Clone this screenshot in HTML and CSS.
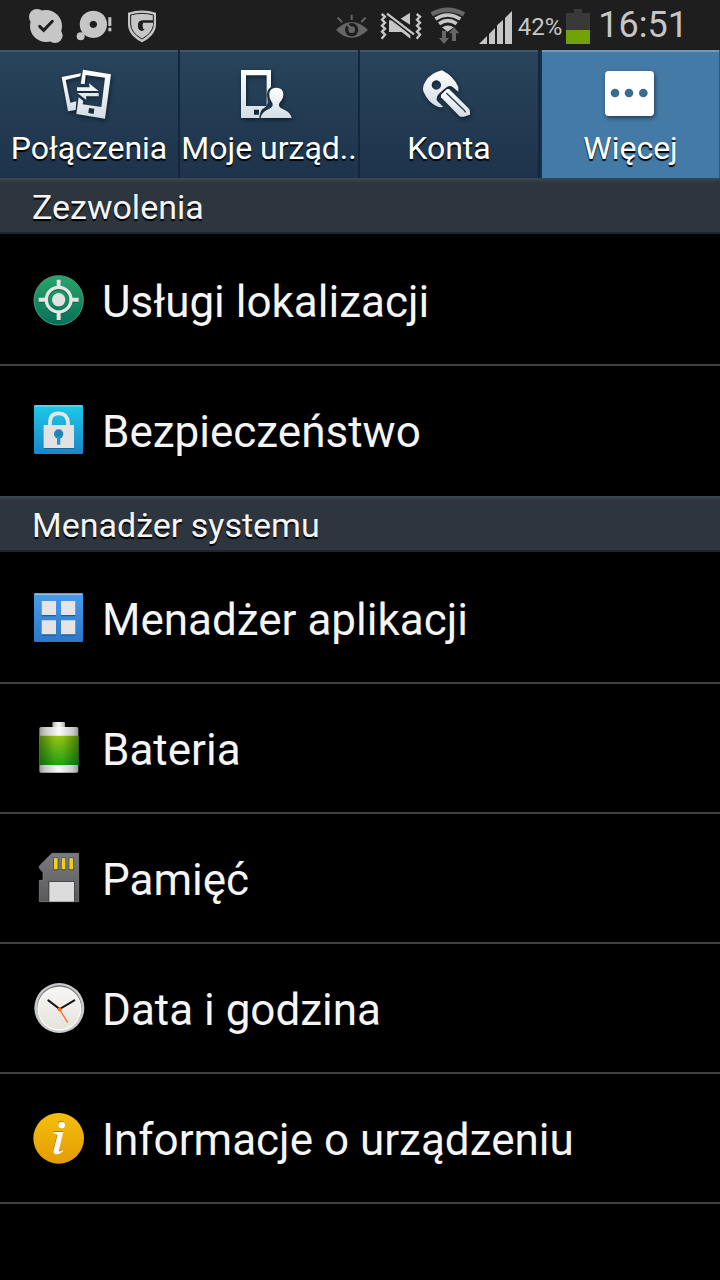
FILE: index.html
```html
<!DOCTYPE html>
<html lang="pl">
<head>
<meta charset="utf-8">
<meta name="viewport" content="width=device-width, initial-scale=1">
<title>Ustawienia</title>
<link rel="stylesheet" href="styles.css">
</head>
<body>
<header class="status">
  <div class="status-notes">
    <svg width="36" height="50" viewBox="84 0 108 150" aria-hidden="true">
      <circle cx="138" cy="78" r="48" fill="#c6c6c6"/><circle cx="111" cy="51" r="24" fill="#c6c6c6"/><circle cx="165" cy="106" r="23" fill="#c6c6c6"/>
      <path d="M119 79l12 12 26-27" fill="none" stroke="#1e1e1e" stroke-width="9" stroke-linecap="round"/>
    </svg>
    <svg width="37" height="50" viewBox="228 0 111 150" aria-hidden="true">
      <path fill="#c6c6c6" fill-rule="evenodd" d="M280 32a41 41 0 1 0 .1 0zM280 62a11 11 0 1 1-.1 0z"/>
      <circle cx="242" cy="109" r="12" fill="#c6c6c6"/>
      <path d="M325 52h9v26h-9zM325 83h9v11h-9z" fill="#c6c6c6"/>
    </svg>
    <svg width="33" height="50" viewBox="375 0 99 150" aria-hidden="true">
      <path d="M384 38q42-13 84 0v34q0 34-42 55-42-21-42-55z" fill="#c6c6c6"/>
      <path d="M392 45q34-10 68 0v27q0 26-34 45-34-19-34-45z" fill="none" stroke="#1e1e1e" stroke-width="3"/>
      <path d="M459 61h-31q-14 1-14 13v7q1 11 12 12 9-3 10-12h-8v-9h31z" fill="#1e1e1e"/>
      <path d="M429 68h30v10h-19v9h-11z" fill="#c6c6c6"/>
    </svg>
  </div>
  <div class="status-system">
    <svg width="36" height="50" viewBox="45 0 108 150" aria-hidden="true">
      <path d="M95 44v16M53 53l13 13M137 53l-13 13" stroke="#666" stroke-width="6" fill="none"/>
      <path d="M48 90q47-48 96 0-49 47-96 0z" fill="#666"/>
      <circle cx="95" cy="89" r="20" fill="#1e1e1e"/><circle cx="95" cy="89" r="10" fill="#666"/>
      <path d="M82 73l13 15" stroke="#666" stroke-width="7"/>
    </svg>
    <svg width="43" height="50" viewBox="177 0 129 150" aria-hidden="true">
      <path d="M185 42l10 8-9 9 9 9-9 9 9 9-9 9 9 9-10 12M290 42l10 8-9 9 9 9-9 9 9 9-9 9 9 9-10 12" fill="none" stroke="#c6c6c6" stroke-width="7"/>
      <path d="M207 61h10l54 44v11l-26-20h-38zM270 38v36l-28-18z" fill="#c6c6c6"/>
      <path d="M201 41l81 62" stroke="#1e1e1e" stroke-width="15"/><path d="M201 41l81 62" stroke="#c6c6c6" stroke-width="7"/>
    </svg>
    <svg width="36" height="50" viewBox="330 0 108 150" aria-hidden="true">
      <path d="M335 43q48-27 97 0" fill="none" stroke="#666" stroke-width="14"/>
      <g fill="none" stroke="#c6c6c6" stroke-width="11"><path d="M346 57q37-24 75 0"/><path d="M357 71q27-18 53 0"/></g>
      <path d="M366 82q18-11 35 0l-18 13z" fill="#c6c6c6"/>
      <path d="M366 92h12v22h9l-15 18-15-18h9zM396 123h12v-23h10l-16-19-15 19h9z" fill="#666"/>
    </svg>
    <svg class="signal" width="38" height="50" viewBox="468 0 114 150" aria-hidden="true">
      <path d="M477 132l24-24v24zM507 132v-30l18-18v48zM531 132V76l18-16v72zM555 132V54l21-21v99z" fill="#c6c6c6"/>
    </svg>
    <span class="percent">42%</span>
    <svg width="24" height="50" viewBox="198 0 72 150" aria-hidden="true">
      <path d="M198 39h24V27h24v12h24v52h-72z" fill="#393939"/><path d="M198 90h72v42h-72z" fill="#73a108"/>
    </svg>
    <time class="clock">16:51</time>
  </div>
</header>

<nav class="tabs">
  <a class="tab" href="#polaczenia">
    <svg class="tab-icon" viewBox="180 63 180 180" aria-hidden="true">
      <defs><linearGradient id="metal" x1="0" y1="0" x2="0" y2="1"><stop offset="0" stop-color="#fff"/><stop offset="1" stop-color="#d2dde5"/></linearGradient></defs>
      <path d="M188 96l58-11-2 9-44 11 14 68 18-4-2 26-23 4z" fill="url(#metal)"/>
      <path fill="url(#metal)" fill-rule="evenodd" d="M252 74l84 14-18 133-86-14 7-50 14 11-2 10 56 8 11-88-58-8-3 28-12-2zM270 189l-2 15 16 3 2-16z"/>
      <path d="M234 127h38l-2-12 29 23h-65zM299 154h-38l1 11-27-21h64z" fill="url(#metal)"/>
    </svg>
    <span class="tab-label">Połączenia</span>
  </a>
  <a class="tab" href="#urzadzenie">
    <svg class="tab-icon" viewBox="180 63 180 180" aria-hidden="true">
      <path fill="url(#metal)" fill-rule="evenodd" d="M186 75h90v51q-14 9-12 28l2 15q1 11-11 20-12 5-14 30h-55zM201 91v92h62v-92zM225 194v15h15v-15z"/>
      <path d="M292 128c-16 0-22 11-21 23 1 17 11 20 10 30-2 14-32 12-36 38h93c-5-26-37-24-38-38 0-10 11-13 13-30 1-12-5-23-21-23z" fill="url(#metal)"/>
    </svg>
    <span class="tab-label">Moje urząd..</span>
  </a>
  <a class="tab" href="#konta">
    <svg class="tab-icon" viewBox="60 63 180 180" aria-hidden="true">
      <path fill="url(#metal)" fill-rule="evenodd" d="M129 76q35 18 49 50v14l-18-15q-10-5-20 4l-18 15q-12 11-8 23l18 18q-8 4-20-2-25-12-38-42-6-15 5-31 15-26 50-34zM112 106a14 14 0 1 0 .1 0z"/>
      <path fill="url(#metal)" d="M150 132l60 59q4 5 3 18l-14 5q-12 4-19-2l-54-55v-8l18-17z"/>
      <path d="M142 144l52 50 6 8" fill="none" stroke="#263e52" stroke-width="4"/>
    </svg>
    <span class="tab-label">Konta</span>
  </a>
  <a class="tab tab-active" href="#wiecej" aria-current="page">
    <svg class="tab-icon" viewBox="603 63 180 180" aria-hidden="true">
      <rect x="615" y="78" width="147" height="135" rx="11" fill="#fff"/>
      <g fill="#3a6b90"><circle cx="645" cy="144" r="13"/><circle cx="687" cy="144" r="13"/><circle cx="730" cy="144" r="13"/></g>
    </svg>
    <span class="tab-label">Więcej</span>
  </a>
</nav>

<main>
  <section>
    <h2 class="heading">Zezwolenia</h2>
    <ul class="list">
      <li class="item"><a class="row" href="#lokalizacja">
        <svg class="row-icon" viewBox="84 45 180 180" aria-hidden="true">
          <defs><linearGradient id="green" x1="0" y1="0" x2="0" y2="1"><stop offset="0" stop-color="#2aa56c"/><stop offset="1" stop-color="#076f58"/></linearGradient></defs>
          <circle cx="176" cy="136" r="74" fill="url(#green)" stroke="#4b9a7d" stroke-width="3"/>
          <g transform="translate(0 4)" fill="none" stroke="#075c43" stroke-opacity=".6"><circle cx="176" cy="134" r="37" stroke-width="10"/><path d="M176 74v24M176 170v25M116 134h24M212 134h24" stroke-width="12"/></g>
          <g fill="none" stroke="#e5e5e5"><circle cx="176" cy="134" r="37" stroke-width="10"/><path d="M176 74v24M176 170v25M116 134h24M212 134h24" stroke-width="12"/></g>
          <circle cx="176" cy="134" r="20" fill="#e2e2e2"/>
        </svg>
        <span class="row-label">Usługi lokalizacji</span></a></li>
      <li class="item"><a class="row" href="#bezpieczenstwo">
        <svg class="row-icon" viewBox="84 435 180 180" aria-hidden="true">
          <defs><linearGradient id="cyan" x1="0" y1="0" x2="0" y2="1"><stop offset="0" stop-color="#1dc9ea"/><stop offset="1" stop-color="#1b86c8"/></linearGradient></defs>
          <rect x="102" y="450" width="147" height="147" rx="4" fill="url(#cyan)"/><path d="M104 453h143" stroke="#7de0f2" stroke-width="3"/>
          <path d="M132 580h90" stroke="#1768a0" stroke-width="4"/>
          <path d="M150 514v-12q0-27 26-27t28 27v12" fill="none" stroke="#e6e6e6" stroke-width="11"/>
          <path d="M131 510h91v69h-91z" fill="#e2e2e2"/>
          <circle cx="176" cy="537" r="14" fill="#1c86b8"/><path d="M171 545h10v24h-10z" fill="#2b93c8"/>
        </svg>
        <span class="row-label">Bezpieczeństwo</span></a></li>
    </ul>
  </section>
  <section>
    <h2 class="heading">Menadżer systemu</h2>
    <ul class="list">
      <li class="item"><a class="row" href="#aplikacje">
        <svg class="row-icon" viewBox="84 324 180 180" aria-hidden="true">
          <defs><linearGradient id="blue" x1="0" y1="0" x2="0" y2="1"><stop offset="0" stop-color="#4a9cec"/><stop offset="1" stop-color="#2a78c8"/></linearGradient></defs>
          <rect x="102" y="339" width="147" height="147" rx="4" fill="url(#blue)"/><path d="M104 343h143" stroke="#9ac8f5" stroke-width="3"/>
          <path d="M125 366h43v43h-43zM183 366h43v43h-43zM125 424h43v43h-43zM183 424h43v43h-43z" fill="#1f5ca0"/>
          <path d="M125 363h43v42h-43zM183 363h43v42h-43zM125 421h43v42h-43zM183 421h43v42h-43z" fill="#e4e4e4"/>
        </svg>
        <span class="row-label">Menadżer aplikacji</span></a></li>
      <li class="item"><a class="row" href="#bateria">
        <svg class="row-icon" viewBox="84 54 180 180" aria-hidden="true">
          <defs>
            <linearGradient id="steel"><stop offset="0" stop-color="#999"/><stop offset=".15" stop-color="#c8c8c8"/><stop offset=".5" stop-color="#fafafa"/><stop offset=".85" stop-color="#ccc"/><stop offset="1" stop-color="#999"/></linearGradient>
            <linearGradient id="charge" x1="0" y1="0" x2="0" y2="1"><stop offset="0" stop-color="#96c211"/><stop offset="1" stop-color="#20a018"/></linearGradient>
            <linearGradient id="edge"><stop offset="0" stop-color="#003800" stop-opacity=".5"/><stop offset=".4" stop-color="#003800" stop-opacity="0"/><stop offset=".6" stop-color="#003800" stop-opacity="0"/><stop offset="1" stop-color="#003800" stop-opacity=".5"/></linearGradient>
          </defs>
          <rect x="157" y="66" width="38" height="20" rx="3" fill="url(#steel)"/>
          <rect x="118" y="81" width="117" height="137" rx="5" fill="url(#steel)"/>
          <path d="M118 107h117v88H118z" fill="url(#charge)"/><path d="M118 107h117v88H118z" fill="url(#edge)"/>
        </svg>
        <span class="row-label">Bateria</span></a></li>
      <li class="item"><a class="row" href="#pamiec">
        <svg class="row-icon" viewBox="84 444 180 180" aria-hidden="true">
          <defs><linearGradient id="card" x1="0" y1="0" x2="0" y2="1"><stop offset="0" stop-color="#7b7c7f"/><stop offset="1" stop-color="#58595b"/></linearGradient></defs>
          <path d="M156 460h80v145H118v-64h11v-24l-11-12v-7z" fill="url(#card)" stroke="#898a8c" stroke-width="2"/>
          <path d="M144 605v-62h81v62" fill="#4a4a4c"/><path d="M148 546h74v59h-74z" fill="#dcdcdd"/>
          <path d="M160 472h15v39h-15zM183 472h15v39h-15zM206 472h15v39h-15z" fill="#4a4637"/>
          <path d="M162 476h11v32h-11zM185 476h11v32h-11zM208 476h11v32h-11z" fill="#f3cf12"/><path d="M162 475h11M185 475h11M208 475h11" stroke="#fff" stroke-width="2"/>
        </svg>
        <span class="row-label">Pamięć</span></a></li>
      <li class="item"><a class="row" href="#data">
        <svg class="row-icon" viewBox="84 54 180 180" aria-hidden="true">
          <defs><linearGradient id="dial" x1="0" y1="0" x2="0" y2="1"><stop offset="0" stop-color="#f7f6f4"/><stop offset="1" stop-color="#e6e3dd"/></linearGradient></defs>
          <circle cx="178" cy="144" r="75" fill="#c9cacc"/><circle cx="178" cy="143" r="67" fill="#77787a"/><circle cx="178" cy="146" r="66" fill="#fff"/><circle cx="178" cy="145" r="63" fill="url(#dial)"/>
          <path d="M145 121l34 26 44-26" fill="none" stroke="#16161a" stroke-width="6" stroke-linecap="round"/>
          <path d="M179 148l24 40" stroke="#f37032" stroke-width="4"/><circle cx="179" cy="148" r="6" fill="#ff6717"/>
        </svg>
        <span class="row-label">Data i godzina</span></a></li>
      <li class="item"><a class="row" href="#informacje">
        <svg class="row-icon" viewBox="84 444 180 180" aria-hidden="true">
          <defs><linearGradient id="gold" x1="0" y1="0" x2="0" y2="1"><stop offset="0" stop-color="#f5bf0b"/><stop offset="1" stop-color="#e49c05"/></linearGradient></defs>
          <circle cx="176" cy="535" r="76" fill="url(#gold)"/>
          <g fill="#b87c05" transform="translate(-1 -3)"><circle cx="185" cy="495" r="10"/><path d="M161 516h29l-13 54q-1 5 3 4l7-3v3q-9 9-19 9-10-1-7-12l11-44q1-5-4-6l-8-1z"/></g>
          <circle cx="185" cy="495" r="10" fill="#fff"/><path d="M161 516h29l-13 54q-1 5 3 4l9-4v4q-9 9-20 9-12-1-8-12l11-44q1-5-4-6l-8-1z" fill="#f8f8f8"/>
        </svg>
        <span class="row-label">Informacje o urządzeniu</span></a></li>
    </ul>
  </section>
</main>
</body>
</html>
```
FILE: styles.css
```css
* {
  box-sizing: border-box;
}

body {
  margin: 0;
  min-height: 100vh;
  background: #000;
  color: #f5f5f5;
  font-family: Roboto, "Noto Sans", sans-serif;
}

a {
  color: inherit;
  text-decoration: none;
}

svg {
  display: block;
  flex: none;
}

.status {
  display: flex;
  justify-content: space-between;
  height: 50px;
  padding: 0 32px 0 28px;
  background: #1e1e1e;
  color: #c6c6c6;
}

.status-notes {
  display: flex;
  gap: 12px;
}

.status-system {
  display: flex;
  align-items: center;
  gap: 8px;
}

.signal {
  margin-left: 2px;
}

.percent {
  margin: 0 -4px;
  padding-top: 4px;
  font-size: 24px;
  line-height: 28px;
}

.clock {
  font-size: 36px;
  line-height: 52px;
}

.tabs {
  display: grid;
  grid-template-columns: repeat(4, 1fr);
  background: linear-gradient(#28445b, #1d334b);
}

.tab {
  display: flex;
  flex-direction: column;
  align-items: center;
  min-width: 0;
  height: 128px;
  padding-top: 16px;
  border-right: 2px solid #12273a;
  box-shadow: inset 0 2px 0 #3c586c;
  color: #fff;
}

.tab-active {
  border-right: 1px solid #2d5878;
  border-left: 2px solid #173248;
  background: #437aa6;
  box-shadow: inset 0 2px 0 #6a9bc0;
}

.tab-icon {
  width: 60px;
  height: 60px;
  filter: drop-shadow(1px 2px 2px rgba(0, 0, 0, 0.5));
}

.tab-label {
  padding-top: 2px;
  font-size: 32px;
  line-height: 40px;
  white-space: nowrap;
  text-shadow: 0 2px 1px #000;
}

.heading {
  margin: 0;
  height: 56px;
  padding: 2px 32px 0;
  border-bottom: 2px solid #1d242a;
  background: linear-gradient(#3a4853, #2d363f 5px);
  font-size: 34px;
  font-weight: 400;
  line-height: 54px;
  text-shadow: 0 2px 1px #000;
}

.list {
  margin: 0;
  padding: 2px 0 0;
  list-style: none;
}

.item {
  border-bottom: 2px solid #404040;
}

section:first-child .item:last-child {
  border-bottom-color: #000;
}

.row {
  display: flex;
  align-items: center;
  gap: 14px;
  height: 128px;
  padding: 0 28px;
}

.row-icon {
  width: 60px;
  height: 60px;
}

.row-label {
  padding-top: 4px;
  font-size: 44px;
  line-height: 52px;
}
```
